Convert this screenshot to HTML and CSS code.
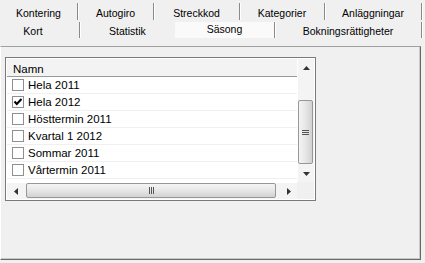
FILE: index.html
```html
<!DOCTYPE html>
<html lang="sv">
<head>
  <meta charset="UTF-8">
  <title>Säsong</title>
  <link rel="stylesheet" href="styles.css">
</head>
<body>

<div class="tabs">
  <div class="tab-row row-back">
    <div class="tab">Kontering</div>
    <div class="tab">Autogiro</div>
    <div class="tab">Streckkod</div>
    <div class="tab">Kategorier</div>
    <div class="tab">Anläggningar</div>
  </div>
  <div class="tab-row row-front">
    <div class="tab tab-kort">Kort</div>
    <div class="tab tab-plain">Statistik</div>
    <div class="tab tab-selected">Säsong</div>
    <div class="tab">Bokningsrättigheter</div>
  </div>
</div>

<div class="panel">
  <div class="listview">
    <div class="lv-main">
      <div class="lv-header">Namn</div>
      <ul class="lv-rows">
        <li><span class="check"></span>Hela 2011</li>
        <li>
          <span class="check">
            <svg width="10" height="10" viewBox="0 0 10 10"><polyline points="1.5,4.5 3.8,7 8.5,2" fill="none" stroke="#000" stroke-width="2"/></svg>
          </span>Hela 2012
        </li>
        <li><span class="check"></span>Hösttermin 2011</li>
        <li><span class="check"></span>Kvartal 1 2012</li>
        <li><span class="check"></span>Sommar 2011</li>
        <li><span class="check"></span>Vårtermin 2011</li>
      </ul>
    </div>

    <div class="vscroll">
      <div class="sb-btn">
        <svg width="7" height="4" viewBox="0 0 7 4"><polygon points="3.5,0 7,4 0,4" fill="#333"/></svg>
      </div>
      <div class="sb-track">
        <div class="thumb thumb-v">
          <svg width="7" height="7" viewBox="0 0 7 7"><path d="M0 1.5h7M0 3.5h7M0 5.5h7" stroke="#555" stroke-width="1"/></svg>
        </div>
      </div>
      <div class="sb-btn">
        <svg width="7" height="4" viewBox="0 0 7 4"><polygon points="0,0 7,0 3.5,4" fill="#333"/></svg>
      </div>
    </div>

    <div class="hscroll">
      <div class="sb-btn">
        <svg width="4" height="7" viewBox="0 0 4 7"><polygon points="4,0 4,7 0,3.5" fill="#333"/></svg>
      </div>
      <div class="sb-track">
        <div class="thumb thumb-h">
          <svg width="7" height="7" viewBox="0 0 7 7"><path d="M1.5 0v7M3.5 0v7M5.5 0v7" stroke="#555" stroke-width="1"/></svg>
        </div>
      </div>
      <div class="sb-btn">
        <svg width="4" height="7" viewBox="0 0 4 7"><polygon points="0,0 4,3.5 0,7" fill="#333"/></svg>
      </div>
    </div>

    <div class="corner"></div>
  </div>
</div>

</body>
</html>
```

FILE: styles.css
```css
/* Tabbed settings dialog, Säsong page */
body {
  margin: 0;
  width: 425px;
  height: 263px;
  overflow: hidden;
  background-color: #f0f0f0;
  font-family: 'Liberation Sans', Arial, sans-serif;
  font-size: 11px;
  color: #000000;
}

/* Flat button tabs, two rows */
.tab-row {
  display: grid;
  height: 21px;
}
.row-back {
  grid-template-columns: 78px 76px 86px 85px 97px;
}
.row-front {
  height: 20px;
  grid-template-columns: 80px 95px 100px 147px;
}
.tab {
  display: flex;
  align-items: center;
  justify-content: center;
  font-size: 10.5px;
  margin: 3px 0 1px 0;
  padding-top: 2px;
  border-right: 1px solid #8a8a8a;
  box-shadow: 1px 0 0 #ffffff;
}
.row-front .tab {
  margin: 1px 0 3px 0;
}
.tab-kort {
  padding-right: 13px;
}
.tab-plain {
  border-right: none;
  box-shadow: none;
}
.tab-selected {
  background-color: #fafafa;
  padding-top: 0;
  padding-bottom: 3px;
}

/* Page panel */
.panel {
  box-sizing: border-box;
  width: 421px;
  height: 214px;
  margin-top: 5px;
  padding: 10px 0 0 4px;
  border-top: 1px solid #a0a0a0;
  border-left: 1px solid #ffffff;
  border-right: 1px solid #696969;
  border-bottom: 1px solid #696969;
  box-shadow: inset -1px -1px 0 #c8c8c8;
}

/* List view with checkboxes */
.listview {
  box-sizing: border-box;
  width: 311px;
  height: 144px;
  border: 1px solid #7a7a7a;
  padding: 1px;
  background-color: #ffffff;
  display: grid;
  grid-template-columns: 290px 17px;
  grid-template-rows: 123px 17px;
}
.lv-main {
  overflow: hidden;
  background-color: #ffffff;
}
.lv-header {
  box-sizing: border-box;
  height: 18px;
  padding: 4px 0 0 6px;
  font-size: 11.5px;
  background-color: #f3f3f3;
  border-bottom: 1px solid #999999;
}
.lv-rows {
  list-style: none;
  margin: 0;
  padding: 0;
}
.lv-rows li {
  box-sizing: border-box;
  height: 17px;
  display: flex;
  align-items: center;
  padding-left: 5px;
  font-size: 11.5px;
  border-bottom: 1px solid #f0f0f0;
}
.check {
  box-sizing: border-box;
  width: 12px;
  height: 12px;
  margin-right: 4px;
  border: 1px solid #8e8f8f;
  background-color: #ffffff;
  display: flex;
  align-items: center;
  justify-content: center;
}

/* Scrollbars */
.vscroll {
  display: grid;
  grid-template-rows: 17px 1fr 17px;
  background-color: #f4f4f4;
  border-left: 1px solid #ffffff;
}
.hscroll {
  display: grid;
  grid-template-columns: 17px 1fr 17px;
  background-color: #f4f4f4;
  border-top: 1px solid #ffffff;
}
.sb-btn {
  display: flex;
  align-items: center;
  justify-content: center;
}
.sb-track {
  display: flex;
}
.thumb {
  box-sizing: border-box;
  border: 1px solid #979797;
  border-radius: 2px;
  display: flex;
  align-items: center;
  justify-content: center;
}
.thumb-v {
  width: 15px;
  height: 64px;
  margin: 24px 0 0 0;
  background: linear-gradient(to right, #f4f4f4, #e6e6e6 50%, #d2d2d2);
}
.thumb-h {
  width: 250px;
  height: 15px;
  margin: 0 0 0 2px;
  background: linear-gradient(to bottom, #f4f4f4, #e6e6e6 50%, #d2d2d2);
}
.corner {
  background-color: #f0f0f0;
}
```
